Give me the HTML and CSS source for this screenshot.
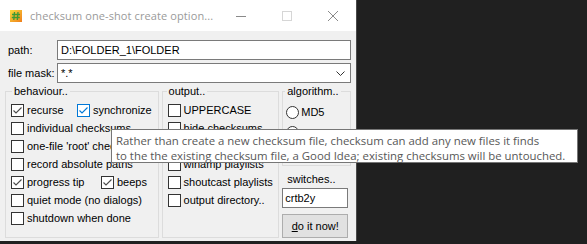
FILE: index.html
```html
<!DOCTYPE html>
<html lang="en">
  <head>
    <meta charset="UTF-8" />
    <title>checksum one-shot create options</title>
    <link rel="stylesheet" href="styles.css">
  </head>
  <body>
    <div class="window">
      <!-- caption bar (inactive window) -->
      <div class="titlebar">
        <svg class="app-icon" viewBox="0 0 12 12" width="12" height="12">
          <defs>
            <linearGradient id="ig" x1="0" y1="0" x2="1" y2="1">
              <stop offset="0" stop-color="#f9dc3c" />
              <stop offset="1" stop-color="#ef7d1a" />
            </linearGradient>
          </defs>
          <rect width="12" height="12" fill="url(#ig)" />
          <path d="M4.5 2 L3.8 10 M8 2 L7.3 10 M2 4.5 H10 M1.8 7.5 H9.8" stroke="#3c9b35" stroke-width="1.3" fill="none" />
        </svg>
        <span class="title">checksum one-shot create option...</span>
        <span class="cap-btn">
          <svg viewBox="0 0 10 10" width="10" height="10"><path d="M0 5.5 H10" stroke="#8a8a8a" /></svg>
        </span>
        <span class="cap-btn">
          <svg viewBox="0 0 10 10" width="10" height="10"><rect x="0.5" y="0.5" width="9" height="9" fill="none" stroke="#d6d6d6" /></svg>
        </span>
        <span class="cap-btn">
          <svg viewBox="0 0 10 10" width="10" height="10"><path d="M0 0 L10 10 M10 0 L0 10" stroke="#8a8a8a" /></svg>
        </span>
      </div>

      <div class="content">
        <div class="field-row">
          <span class="field-label">path:</span>
          <div class="textbox">D:\FOLDER_1\FOLDER</div>
        </div>
        <div class="field-row">
          <span class="field-label">file mask:</span>
          <div class="textbox combo">
            <span>*.*</span>
            <svg viewBox="0 0 9 5" width="9" height="5"><path d="M0.5 0.5 L4.5 4.5 L8.5 0.5" fill="none" stroke="#333" /></svg>
          </div>
        </div>

        <div class="groups">
          <fieldset class="group behaviour">
            <legend>behaviour..</legend>
            <div class="check-row">
              <label class="check col-a"><span class="box"><svg viewBox="0 0 11 11"><path d="M1.5 5.5 L4 8 L9.5 2.5" /></svg></span>recurse</label>
              <label class="check focused"><span class="box"><svg viewBox="0 0 11 11"><path d="M1.5 5.5 L4 8 L9.5 2.5" /></svg></span>synchronize</label>
            </div>
            <div class="check-row">
              <label class="check"><span class="box"></span>individual checksums</label>
            </div>
            <div class="check-row">
              <label class="check"><span class="box"></span>one-file 'root' checksums</label>
            </div>
            <div class="check-row">
              <label class="check"><span class="box"></span>record absolute paths</label>
            </div>
            <div class="check-row">
              <label class="check col-b"><span class="box"><svg viewBox="0 0 11 11"><path d="M1.5 5.5 L4 8 L9.5 2.5" /></svg></span>progress tip</label>
              <label class="check"><span class="box"><svg viewBox="0 0 11 11"><path d="M1.5 5.5 L4 8 L9.5 2.5" /></svg></span>beeps</label>
            </div>
            <div class="check-row">
              <label class="check"><span class="box"></span>quiet mode (no dialogs)</label>
            </div>
            <div class="check-row">
              <label class="check"><span class="box"></span>shutdown when done</label>
            </div>
          </fieldset>

          <fieldset class="group output">
            <legend>output..</legend>
            <div class="check-row">
              <label class="check"><span class="box"></span>UPPERCASE</label>
            </div>
            <div class="check-row">
              <label class="check"><span class="box"></span>hide checksums</label>
            </div>
            <div class="check-row">
              <label class="check"><span class="box"></span>unix paths</label>
            </div>
            <div class="check-row">
              <label class="check"><span class="box"></span>winamp playlists</label>
            </div>
            <div class="check-row">
              <label class="check"><span class="box"></span>shoutcast playlists</label>
            </div>
            <div class="check-row">
              <label class="check"><span class="box"></span>output directory..</label>
            </div>
          </fieldset>

          <div class="side">
            <fieldset class="group algorithm">
              <legend>algorithm..</legend>
              <div class="radio-row">
                <label class="check"><span class="radio"></span>MD5</label>
              </div>
              <div class="radio-row">
                <label class="check"><span class="radio"></span>SHA1</label>
              </div>
              <div class="radio-row">
                <label class="check"><span class="radio"></span>BLAKE2</label>
              </div>
            </fieldset>
            <div class="switches-label">switches..</div>
            <div class="textbox switches">crtb2y</div>
            <button class="go-btn"><u>d</u>o it now!</button>
          </div>
        </div>
      </div>
    </div>

    <!-- hover tip for "synchronize" -->
    <div class="tooltip">
      Rather than create a new checksum file, checksum can add any new files it finds<br>
      to the the existing checksum file, a Good Idea; existing checksums will be untouched.
    </div>
  </body>
</html>
```

FILE: styles.css
```css
body {
  margin: 0;
  padding: 0;
  width: 587px;
  height: 244px;
  overflow: hidden;
  background-color: #202020;
  font-family: 'Liberation Sans', Arial, sans-serif;
  font-size: 11px;
  color: #000;
  position: relative;
}

/* Dialog window */
.window {
  width: 356px;
  height: 241px;
  background-color: #f0f0f0;
  border-right: 1px solid #4a4a4a;
  display: flex;
  flex-direction: column;
}

.titlebar {
  height: 31px;
  flex: none;
  background-color: #ffffff;
  display: flex;
  align-items: center;
  padding-left: 10px;
}

.app-icon {
  flex: none;
  margin-right: 8px;
}

.title {
  font-family: 'Open Sans', sans-serif;
  font-size: 11px;
  letter-spacing: 0.1px;
  color: #9a9a9a;
  flex: 1;
  white-space: nowrap;
  overflow: hidden;
}

.cap-btn {
  width: 46px;
  height: 31px;
  flex: none;
  display: flex;
  align-items: center;
  justify-content: center;
}

.content {
  padding: 9px 5px 0 5px;
}

/* path / file mask rows */
.field-row {
  display: flex;
  align-items: center;
  margin-bottom: 3px;
}

.field-label {
  width: 49px;
  padding-left: 3px;
  flex: none;
}

.textbox {
  box-sizing: border-box;
  height: 20px;
  flex: 1;
  background-color: #ffffff;
  border: 1px solid #7a7a7a;
  padding: 0 3px;
  line-height: 18px;
  font-size: 11px;
  white-space: nowrap;
}

.combo {
  display: flex;
  align-items: center;
  justify-content: space-between;
  padding-right: 5px;
}

/* group boxes */
.groups {
  display: flex;
  margin-top: -1px;
}

.group {
  margin: 0;
  padding: 3px 4px 5px 5px;
  border: 1px solid #dcdcdc;
  min-width: 0;
}

.group legend {
  padding: 0 2px;
  margin-left: 1px;
  line-height: 13px;
}

.behaviour {
  width: 154px;
  box-sizing: border-box;
}

.output {
  width: 118px;
  box-sizing: border-box;
  margin-left: 3px;
}

.output legend,
.algorithm legend {
  margin-left: -1px;
}

.side {
  margin-left: 3px;
  width: 69px;
  display: flex;
  flex-direction: column;
  align-self: flex-start;
}

.algorithm {
  padding: 4px 2px 1px 3px;
}

.check-row {
  height: 18px;
  display: flex;
  align-items: center;
}

.radio-row {
  height: 21px;
  display: flex;
  align-items: center;
}

.radio-row:first-of-type {
  height: 20px;
}

.check {
  display: flex;
  align-items: center;
  white-space: nowrap;
}

.col-a {
  width: 66px;
}

.col-b {
  width: 90px;
}

.box {
  box-sizing: border-box;
  width: 13px;
  height: 13px;
  border: 1px solid #333333;
  background-color: #ffffff;
  margin-right: 3px;
  flex: none;
  display: flex;
}

.box svg {
  width: 11px;
  height: 11px;
}

.box path {
  fill: none;
  stroke: #4a4a4a;
  stroke-width: 1.1;
}

.focused .box {
  border-color: #0078d7;
}

.focused .box path {
  stroke: #0078d7;
}

.radio {
  box-sizing: border-box;
  width: 13px;
  height: 13px;
  border: 1px solid #333333;
  border-radius: 50%;
  background-color: #ffffff;
  margin-right: 2px;
  flex: none;
}

.switches-label {
  margin-top: 7px;
  padding-left: 5px;
  line-height: 13px;
}

.textbox.switches {
  flex: none;
  height: 20px;
  margin-top: 2px;
  padding-left: 2px;
  width: 66px;
}

.go-btn {
  margin-top: 6px;
  width: 66px;
  height: 24px;
  padding: 0;
  font-family: inherit;
  font-size: 11px;
  color: #000;
  background-color: #e1e1e1;
  border: 1px solid #adadad;
}

/* tooltip over the dialog */
.tooltip {
  position: absolute;
  left: 111px;
  top: 129px;
  width: 467px;
  height: 34px;
  box-sizing: border-box;
  background-color: #ffffff;
  border: 1px solid #767676;
  padding: 3px 0 0 4px;
  font-family: 'Open Sans', sans-serif;
  font-size: 11.4px;
  line-height: 15px;
  color: #575757;
  white-space: nowrap;
}
```
